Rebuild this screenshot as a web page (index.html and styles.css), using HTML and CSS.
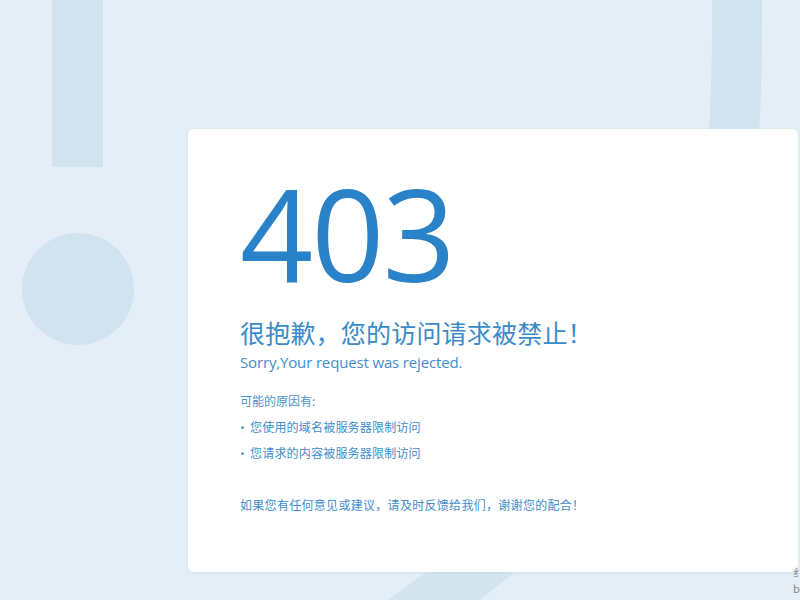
FILE: index.html
```html
<!DOCTYPE html>
<html lang="zh-CN">
<head>
<meta charset="utf-8">
<title>403</title>
<link rel="stylesheet" href="styles.css">
</head>
<body>
<div class="page">
  <svg class="deco" width="800" height="600" viewBox="0 0 800 600" aria-hidden="true">
    <rect x="52" y="0" width="51" height="167" fill="#d1e3ef"/>
    <circle cx="78" cy="289" r="56" fill="#d1e3ef"/>
    <path d="M737 -10 Q738 60 733 160" stroke="#d1e3ef" stroke-width="50" fill="none"/>
    <polygon points="428,571 516,571 480,600 388,600" fill="#d3e4ef"/>
  </svg>
  <div class="card">
    <div class="code">403</div>
    <h1 class="title">很抱歉，您的访问请求被禁止！</h1>
    <p class="subtitle">Sorry,Your request was rejected.</p>
    <p class="reason-head">可能的原因有:</p>
    <ul class="reasons">
      <li>您使用的域名被服务器限制访问</li>
      <li>您请求的内容被服务器限制访问</li>
    </ul>
    <p class="feedback">如果您有任何意见或建议，请及时反馈给我们，谢谢您的配合！</p>
  </div>
  <div class="corner-note"><span>纟</span><span>b</span></div>
</div>
</body>
</html>
```

FILE: styles.css
```css
html, body {
  margin: 0;
  padding: 0;
  width: 800px;
  height: 600px;
  overflow: hidden;
  background: #e3eef6;
  font-family: "Noto Sans CJK SC", "Open Sans", sans-serif;
}

.page {
  position: relative;
  width: 800px;
  height: 600px;
  padding-top: 129px;
  box-sizing: border-box;
}

.deco {
  position: absolute;
  left: 0;
  top: 0;
}

.card {
  position: relative;
  margin-left: 188px;
  width: 610px;
  height: 443px;
  box-sizing: border-box;
  padding: 40px 0 0 52px;
  background: #ffffff;
  border-radius: 6px;
  box-shadow: 0 1px 3px rgba(120, 160, 190, 0.15);
}

.code {
  font-family: "Open Sans", sans-serif;
  font-size: 128px;
  font-weight: 500;
  line-height: 127px;
  height: 127px;
  color: #2a82c9;
  letter-spacing: -2px;
}

.title {
  margin: 24px 0 0 0;
  font-size: 25px;
  line-height: 25px;
  font-weight: normal;
  color: #3b8bc9;
  letter-spacing: 0.2px;
}

.subtitle {
  margin: 8px 0 0 0;
  font-family: "Open Sans", sans-serif;
  font-size: 15px;
  line-height: 18px;
  color: #3f8dca;
  letter-spacing: -0.15px;
}

.reason-head {
  margin: 17px 0 0 0;
  font-size: 12px;
  line-height: 26px;
  color: #4d93cb;
}

.reasons {
  list-style: none;
  margin: 0;
  padding: 0;
}

.reasons li {
  display: flex;
  align-items: center;
  font-size: 12px;
  line-height: 26px;
  color: #3f8dca;
  letter-spacing: 0.2px;
}

.reasons li::before {
  content: "";
  width: 3px;
  height: 3px;
  border-radius: 50%;
  background: #6a9fcb;
  margin: 1px 6px 0 1px;
}

.feedback {
  margin: 26px 0 0 0;
  font-size: 12px;
  line-height: 26px;
  color: #3f8dca;
  letter-spacing: 0.3px;
}

.corner-note {
  position: absolute;
  left: 793px;
  top: 565px;
  display: flex;
  flex-direction: column;
  gap: 2px;
  font-size: 11px;
  line-height: 14px;
  color: #888;
}
```
